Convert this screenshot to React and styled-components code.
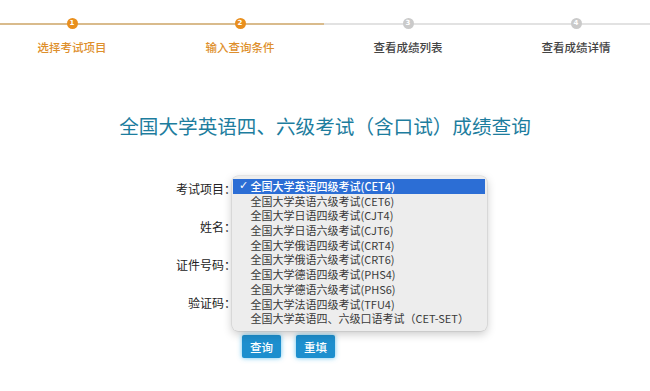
import React from 'react';
import styled, { createGlobalStyle } from 'styled-components';

const GlobalStyle = createGlobalStyle`
    html, body {
        margin: 0;
        background: #ffffff;
        overflow: hidden;
    }
    body {
        font-family: "Noto Sans CJK SC", "Noto Sans", sans-serif;
        color: #333;
    }
`;

const Page = styled.div`
    width: 650px;
    height: 391px;
    overflow: hidden;
`;

const StepBar = styled.div`
    display: grid;
    grid-template-columns: repeat(4, 168px);
    width: 672px;
    height: 60px;
    margin-left: -12px;
`;

const Step = styled.div`
    position: relative;
    display: flex;
    flex-direction: column;
    align-items: center;
    padding-top: 18px;

    &::before {
        content: "";
        position: absolute;
        top: 23px;
        left: 0;
        right: 0;
        height: 2px;
        background: ${p => (p.$active ? '#d9bb8c' : '#e2e2e2')};
    }
`;

const Dot = styled.span`
    position: relative;
    z-index: 1;
    width: 11px;
    height: 11px;
    border-radius: 50%;
    background: ${p => (p.$active ? '#e98f1d' : '#cacaca')};
    color: #fff;
    font-size: 7px;
    line-height: 11px;
    text-align: center;
    font-family: "DejaVu Sans", sans-serif;
    font-weight: bold;
`;

const StepLabel = styled.span`
    margin-top: 10px;
    font-size: 11.5px;
    line-height: 16px;
    font-weight: 500;
    color: ${p => (p.$active ? '#de8f2c' : '#444')};
`;

const Title = styled.h1`
    margin: 52px 0 0;
    font-size: 19.6px;
    line-height: 28px;
    font-weight: 400;
    text-align: center;
    color: #1d7d9e;
`;

const Form = styled.div`
    position: relative;
    margin-top: 29px;
    display: grid;
    grid-template-columns: 236px 250px;
    grid-auto-rows: 38px;
    align-items: center;
`;

const Label = styled.span`
    font-size: 12px;
    text-align: right;
    color: #222;
`;

const Field = styled.div`
    width: 240px;
    height: 24px;
    margin-left: 2px;
    box-sizing: border-box;
    border: 1px solid #c9c9c9;
    border-radius: 3px;
    background: #fff;
`;

const Menu = styled.ul`
    position: absolute;
    top: 7px;
    left: 232px;
    width: 255px;
    margin: 0;
    padding: 3px 2px 5px 1px;
    box-sizing: border-box;
    list-style: none;
    background: #ededed;
    border-radius: 6px;
    box-shadow: 0 3px 10px rgba(0, 0, 0, 0.22), 0 0 0 0.5px rgba(0, 0, 0, 0.12);
    z-index: 2;
`;

const Item = styled.li`
    display: flex;
    align-items: center;
    height: 14.7px;
    padding-left: 6px;
    font-size: 11px;
    line-height: 14.7px;
    white-space: nowrap;
    color: ${p => (p.$selected ? '#fff' : '#3a3a3a')};
    background: ${p => (p.$selected ? '#2c6ed5' : 'transparent')};
    font-weight: ${p => (p.$selected ? 500 : 400)};
`;

const Check = styled.span`
    width: 11.5px;
    flex: none;
    font-size: 11px;
    font-weight: bold;
    font-family: "DejaVu Sans", sans-serif;
`;

const Actions = styled.div`
    display: flex;
    gap: 15px;
    margin-top: 14px;
    padding-left: 242px;
`;

const Button = styled.button`
    width: 39px;
    height: 23px;
    padding: 0;
    border: none;
    border-radius: 2px;
    background: #1d8fce;
    box-shadow: 0 0 5px rgba(40, 170, 230, 0.7);
    color: #fff;
    font-family: "Noto Sans CJK SC", sans-serif;
    font-size: 11.5px;
    font-weight: 500;
`;

const steps = [
    { label: '选择考试项目', active: true },
    { label: '输入查询条件', active: true },
    { label: '查看成绩列表', active: false },
    { label: '查看成绩详情', active: false },
];

const exams = [
    '全国大学英语四级考试(CET4)',
    '全国大学英语六级考试(CET6)',
    '全国大学日语四级考试(CJT4)',
    '全国大学日语六级考试(CJT6)',
    '全国大学俄语四级考试(CRT4)',
    '全国大学俄语六级考试(CRT6)',
    '全国大学德语四级考试(PHS4)',
    '全国大学德语六级考试(PHS6)',
    '全国大学法语四级考试(TFU4)',
    '全国大学英语四、六级口语考试（CET-SET）',
];

const fields = ['考试项目：', '姓名：', '证件号码：', '验证码：'];

export default function App() {
    return (
        <Page>
            <GlobalStyle />
            <StepBar>
                {steps.map((s, i) => (
                    <Step key={s.label} $active={s.active}>
                        <Dot $active={s.active}>{i + 1}</Dot>
                        <StepLabel $active={s.active}>{s.label}</StepLabel>
                    </Step>
                ))}
            </StepBar>

            <Title>全国大学英语四、六级考试（含口试）成绩查询</Title>

            <Form>
                {fields.map(f => (
                    <React.Fragment key={f}>
                        <Label>{f}</Label>
                        <Field />
                    </React.Fragment>
                ))}
                <Menu>
                    {exams.map((e, i) => (
                        <Item key={e} $selected={i === 0}>
                            <Check>{i === 0 ? '✓' : ''}</Check>
                            {e}
                        </Item>
                    ))}
                </Menu>
            </Form>

            <Actions>
                <Button>查询</Button>
                <Button>重填</Button>
            </Actions>
        </Page>
    );
}
